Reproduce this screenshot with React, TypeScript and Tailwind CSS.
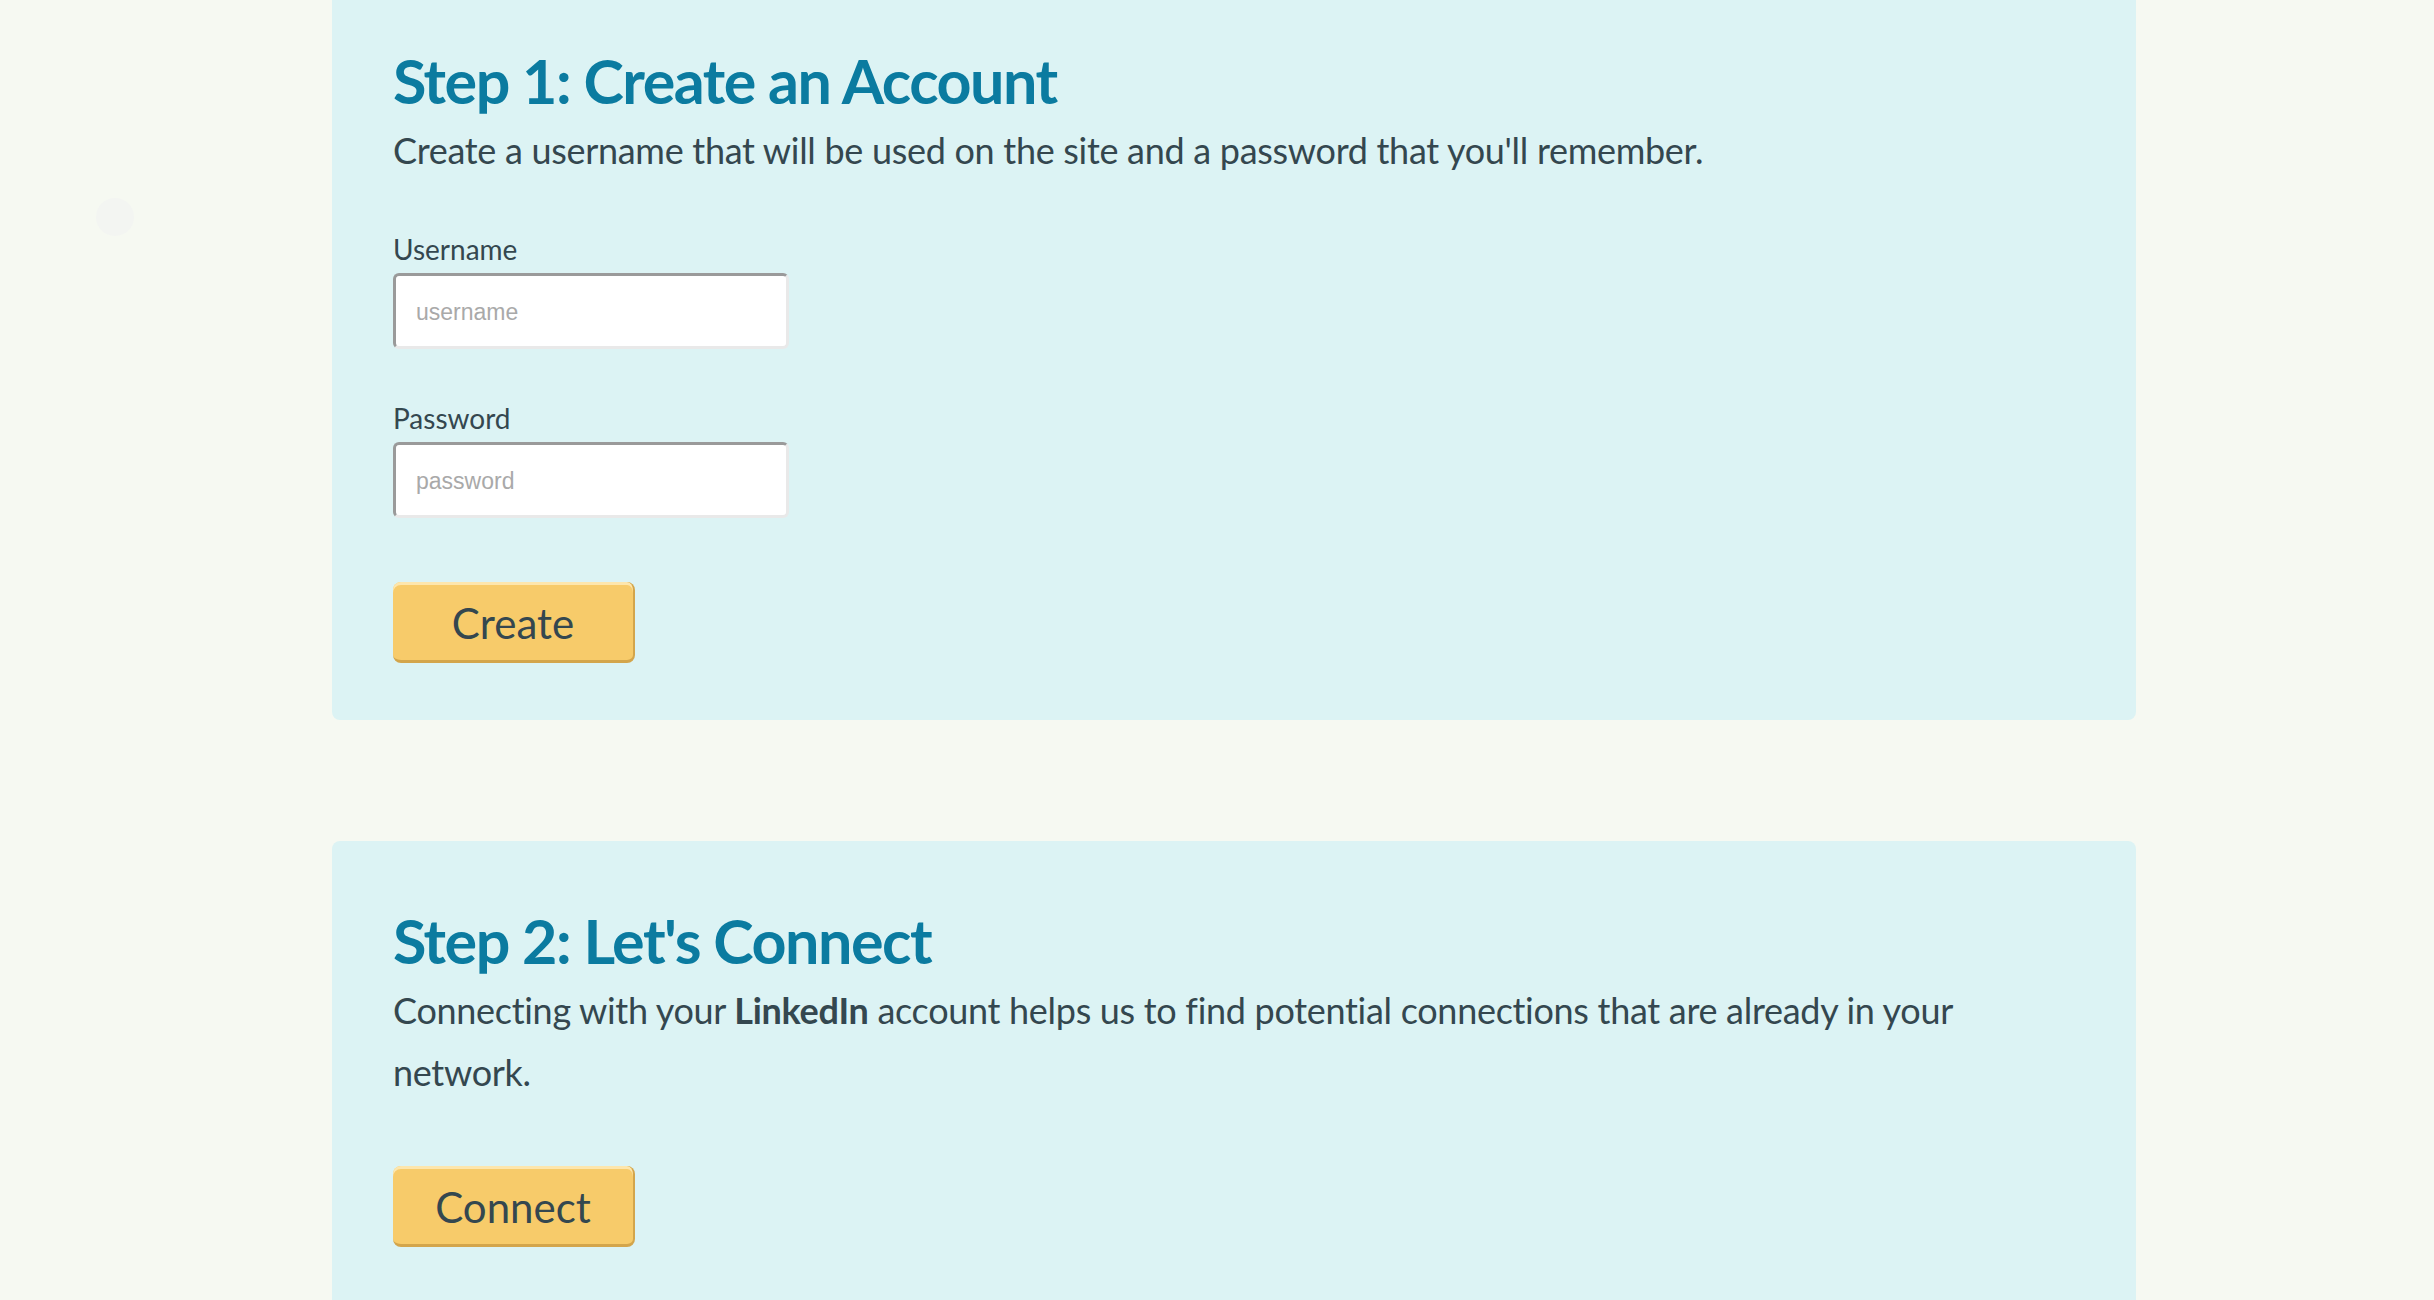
import { useState } from 'react';

const font = "font-['Lato',_'Open_Sans',_sans-serif]";

function Field({ label, placeholder, type = 'text' }: { label: string; placeholder: string; type?: string }) {
  const [value, setValue] = useState('');
  return (
    <div className="flex flex-col">
      <label className={`${font} text-[28px] leading-[36px] text-[#34474f]`}>{label}</label>
      <input
        type={type}
        value={value}
        onChange={e => setValue(e.target.value)}
        placeholder={placeholder}
        className="mt-[6px] w-[396px] h-[76px] bg-white rounded-[6px] border-[3px] border-t-[#9a9a9a] border-l-[#9a9a9a] border-b-[#e9e9e9] border-r-[#e9e9e9] pl-[20px] pt-[3px] font-['Liberation_Sans',_Arial,_sans-serif] text-[23px] text-[#333] placeholder:text-[#a9a9a9] outline-none"
      />
    </div>
  );
}

function YellowButton({ children }: { children: string }) {
  return (
    <button
      type="button"
      className={`${font} w-[242px] h-[81px] flex items-center justify-center rounded-[8px] bg-[#f7cb6a] border-b-[3px] border-r-[2px] border-[#d3a54b] shadow-[inset_0_3px_0_#fde6ad] text-[42px] leading-[50px] text-[#34474f] pt-[3px] hover:bg-[#f5c355]`}
    >
      {children}
    </button>
  );
}

export default function App() {
  return (
    <div className="relative min-h-screen bg-[#f6f9f2] pb-[40px]">
      <div className="absolute left-[96px] top-[198px] w-[38px] h-[38px] rounded-full bg-[#f3f5f2]" />
      <div className="ml-[332px] w-[1804px]">
        <section className="bg-[#dcf3f4] rounded-b-[8px] px-[61px] pt-[45px] pb-[57px]">
          <h1 className={`${font} text-[61px] leading-[72px] font-bold tracking-[-1.5px] text-[#0b7ba0]`}>
            Step 1: Create an Account
          </h1>
          <p className={`${font} mt-[2px] text-[36px] leading-[62px] tracking-[-0.3px] text-[#34474f]`}>
            Create a username that will be used on the site and a password that you'll remember.
          </p>
          <div className="mt-[50px] flex flex-col gap-[51px]">
            <Field label="Username" placeholder="username" />
            <Field label="Password" placeholder="password" type="password" />
          </div>
          <div className="mt-[64px]">
            <YellowButton>Create</YellowButton>
          </div>
        </section>

        <section className="mt-[121px] bg-[#dcf3f4] rounded-t-[8px] px-[61px] pt-[64px] pb-[80px]">
          <h2 className={`${font} text-[61px] leading-[72px] font-bold tracking-[-1.5px] text-[#0b7ba0]`}>
            Step 2: Let's Connect
          </h2>
          <p className={`${font} mt-[2px] max-w-[1600px] text-[36px] leading-[62px] tracking-[-0.3px] text-[#34474f]`}>
            Connecting with your <strong className="font-bold">LinkedIn</strong> account helps us to find potential connections that are already in your network.
          </p>
          <div className="mt-[63px]">
            <YellowButton>Connect</YellowButton>
          </div>
        </section>
      </div>
    </div>
  );
}
